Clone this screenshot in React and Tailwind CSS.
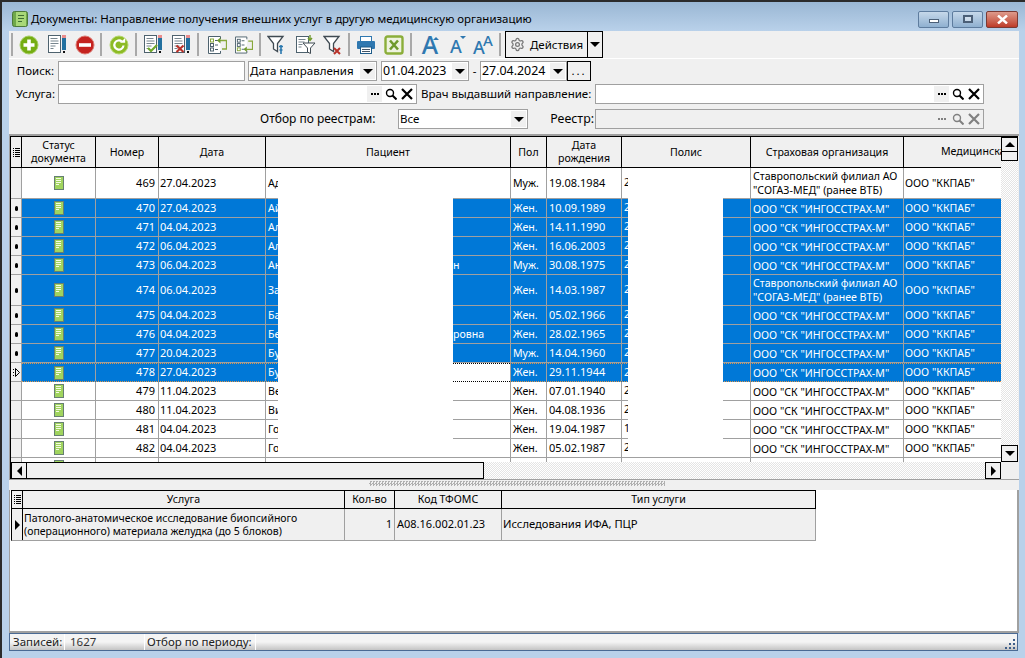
import { Settings } from "lucide-react";

const rows = [
  { n: 469, d: "27.04.2023", p: "Ад", s: "Муж.", b: "19.08.1984", o: "2", tall: true, ins: ["Ставропольский филиал АО", "\"СОГАЗ-МЕД\" (ранее ВТБ)"] },
  { n: 470, d: "27.04.2023", p: "Ай", s: "Жен.", b: "10.09.1989", o: "2", sel: true },
  { n: 471, d: "04.04.2023", p: "Ал", s: "Жен.", b: "14.11.1990", o: "2", sel: true },
  { n: 472, d: "06.04.2023", p: "Ал", s: "Жен.", b: "16.06.2003", o: "2", sel: true },
  { n: 473, d: "06.04.2023", p: "Ан", tail: "н", s: "Муж.", b: "30.08.1975", o: "2", sel: true },
  { n: 474, d: "06.04.2023", p: "За", s: "Жен.", b: "14.03.1987", o: "2", sel: true, tall: true, ins: ["Ставропольский филиал АО", "\"СОГАЗ-МЕД\" (ранее ВТБ)"] },
  { n: 475, d: "04.04.2023", p: "Ба", s: "Жен.", b: "05.02.1966", o: "2", sel: true },
  { n: 476, d: "04.04.2023", p: "Бе", tail: "ровна", s: "Жен.", b: "28.02.1965", o: "2", sel: true },
  { n: 477, d: "20.04.2023", p: "Бу", s: "Муж.", b: "14.04.1960", o: "2", sel: true },
  { n: 478, d: "27.04.2023", p: "Бу", s: "Жен.", b: "29.11.1944", o: "2", sel: true, cur: true },
  { n: 479, d: "11.04.2023", p: "Ве", s: "Жен.", b: "07.01.1940", o: "2" },
  { n: 480, d: "11.04.2023", p: "Ви", s: "Жен.", b: "04.08.1936", o: "2" },
  { n: 481, d: "04.04.2023", p: "Го", s: "Жен.", b: "19.04.1987", o: "1" },
  { n: 482, d: "04.04.2023", p: "Го", s: "Жен.", b: "05.02.1987", o: "2" },
];

function DocStatus() {
  return (
    <svg width="10" height="14" viewBox="0 0 10 14" className="shrink-0">
      <rect x="0.5" y="0.5" width="9" height="13" fill="#a0d45e" stroke="#667f72" />
      <path d="M2 2.500h5M2 4.500h5M2 6.500h5M2 8.500h3" stroke="#f4fae4" strokeWidth="1" />
    </svg>
  );
}

function Plus() {
  return (
    <svg width="20" height="20" viewBox="0 0 20 20">
      <circle cx="10" cy="10" r="9" fill="#75ad12" stroke="#a5cc63" />
      <path d="M10 4.5v11M4.5 10h11" stroke="#fff" strokeWidth="3.6" />
    </svg>
  );
}

function Minus() {
  return (
    <svg width="20" height="20" viewBox="0 0 20 20">
      <circle cx="10" cy="10" r="9" fill="#c5231f" stroke="#dc7a72" />
      <path d="M4 10h12" stroke="#fff" strokeWidth="3.6" />
    </svg>
  );
}

function Refresh() {
  return (
    <svg width="20" height="20" viewBox="0 0 20 20">
      <circle cx="10" cy="10" r="9" fill="#8dbb25" stroke="#b4d66d" />
      <path d="M14.5 10.5a4.6 4.6 0 1 1-1.6-4" fill="none" stroke="#fff" strokeWidth="2.2" />
      <path d="M11 7.8h5.2V3z" fill="#fff" />
    </svg>
  );
}

function Pencil({ x }) {
  return (
    <g>
      <rect x={x} y="0" width="4" height="3" fill="#e98c8c" />
      <rect x={x} y="3" width="4" height="12" fill="#22709f" />
      <rect x={x + 1} y="16" width="2" height="2" fill="#111" />
    </g>
  );
}

function DocLines({ mark }) {
  return (
    <svg width="19" height="19" viewBox="0 0 19 19">
      <rect x="0.5" y="0.5" width="12" height="17" fill="#fff" stroke="#4e626e" />
      <path d="M2.5 3.5h7M2.5 6h8M2.5 8.5h8M2.5 11h5M2.5 13.5h3" stroke="#77858e" />
      {mark === "check" && <path d="M4 13l3 3 6-6" fill="none" stroke="#6fa82a" strokeWidth="2.2" />}
      {mark === "x" && <path d="M4.5 10.5l7 6.5M11.5 10.5l-7 6.5" stroke="#b8322a" strokeWidth="2.2" />}
      <Pencil x={14} />
    </svg>
  );
}

function ListSwap({ flip }) {
  return (
    <svg width="19" height="18" viewBox="0 0 19 18">
      <path d="M12.500 3V0.500H0.500v17h12V15" fill="#fff" stroke="#4e626e" />
      <rect x="2.500" y="3" width="3" height="3" fill="none" stroke={flip ? "#4e626e" : "#88a83c"} />
      <rect x="2.500" y="7.500" width="3" height="3" fill="none" stroke="#4e626e" />
      <rect x="2.500" y="12" width="3" height="3" fill="none" stroke={flip ? "#88a83c" : "#4e626e"} />
      <path d="M7 4.500h3M7 9h3M7 13.500h3" stroke="#4e626e" />
      {flip ? (
        <>
          <path d="M14 5h4.500v8.500H12" fill="none" stroke="#88a83c" strokeWidth="1.300" />
          <path d="M9 13.500l3.500-3v6z" fill="#6f9a2c" />
        </>
      ) : (
        <>
          <path d="M12 4.500h6.500V13H14" fill="none" stroke="#88a83c" strokeWidth="1.300" />
          <path d="M9 4.500l3.500-3v6z" fill="#6f9a2c" />
        </>
      )}
    </svg>
  );
}

function Funnel({ mark }) {
  return (
    <svg width="20" height="20" viewBox="0 0 20 20">
      <path d="M1 1.500h15l-5.500 7v8l-4-2.500v-5.500z" fill="#fff" stroke="#3f4a52" strokeWidth="1.300" />
      {mark === "tool" && <path d="M14 10v9M12 11.500h4M12.500 15h3" stroke="#2b78ae" strokeWidth="1.600" />}
      {mark === "x" && <path d="M11 13l6 6M17 13l-6 6" stroke="#b8322a" strokeWidth="2" />}
    </svg>
  );
}

function DocFunnel() {
  return (
    <svg width="20" height="20" viewBox="0 0 20 20">
      <rect x="0.500" y="1.500" width="12" height="16" fill="#fff" stroke="#4e626e" />
      <path d="M2.500 4.500h7M2.500 7h6M2.500 9.500h4M2.500 12h3" stroke="#77858e" />
      <path d="M7 8h12l-4.500 5v5.500l-3-1.500v-4z" fill="#fff" stroke="#3f4a52" />
      <path d="M14 0v5M12 3l2 2.500 2-2.500" fill="none" stroke="#6f9a2c" strokeWidth="1.400" />
    </svg>
  );
}

function Printer() {
  return (
    <svg width="20" height="20" viewBox="0 0 20 20">
      <rect x="4.500" y="1.500" width="11" height="5" fill="#fff" stroke="#2f78b0" />
      <rect x="1" y="6" width="18" height="8" rx="1" fill="#2f78b0" />
      <rect x="4.500" y="12" width="11" height="6.500" fill="#fff" stroke="#1f5c8a" />
      <path d="M6 14.500h8M6 16.500h8" stroke="#456" />
    </svg>
  );
}

function Excel() {
  return (
    <svg width="20" height="20" viewBox="0 0 20 20">
      <rect x="1.500" y="1.500" width="17" height="17" rx="2" fill="#eef3df" stroke="#8bae3a" strokeWidth="2.400" />
      <path d="M6 5.500l8 9M14 5.500l-8 9" stroke="#6f9a2c" strokeWidth="2.600" />
    </svg>
  );
}

function Arrow({ dir = "down" }) {
  if (dir === "up") return <div className="w-0 h-0 border-x-[5px] border-x-transparent border-b-[5px] border-b-black" />;
  if (dir === "left") return <div className="w-0 h-0 border-y-[5px] border-y-transparent border-r-[5px] border-r-black" />;
  if (dir === "right") return <div className="w-0 h-0 border-y-[5px] border-y-transparent border-l-[5px] border-l-black" />;
  return <div className="w-0 h-0 border-x-[5px] border-x-transparent border-t-[5px] border-t-black" />;
}

function Sep() {
  return <div className="w-[2px] h-[23px] bg-[#a9a9a9] shrink-0" />;
}

function Slot({ className, children }) {
  return <div className={`flex items-center justify-center shrink-0 h-full ${className}`}>{children}</div>;
}

function Toolbar() {
  return (
    <div className="h-[27px] bg-[#f0f0f0] flex items-center shrink-0">
      <div className="w-[2px] shrink-0" />
      <Sep />
      <Slot className="w-[32px]"><Plus /></Slot>
      <Slot className="w-[24px]"><DocLines /></Slot>
      <Slot className="w-[31px]"><Minus /></Slot>
      <Sep />
      <Slot className="w-[33px]"><Refresh /></Slot>
      <Sep />
      <Slot className="w-[33px]"><DocLines mark="check" /></Slot>
      <Slot className="w-[22px]"><DocLines mark="x" /></Slot>
      <div className="w-[5px] shrink-0" />
      <Sep />
      <Slot className="w-[36px]"><ListSwap /></Slot>
      <Slot className="w-[18px]"><ListSwap flip /></Slot>
      <div className="w-[6px] shrink-0" />
      <Sep />
      <Slot className="w-[32px]"><Funnel mark="tool" /></Slot>
      <Slot className="w-[26px]"><DocFunnel /></Slot>
      <Slot className="w-[28px]"><Funnel mark="x" /></Slot>
      <div className="w-[1px] shrink-0" />
      <Sep />
      <Slot className="w-[32px]"><Printer /></Slot>
      <Slot className="w-[24px]"><Excel /></Slot>
      <div className="w-[4px] shrink-0" />
      <Sep />
      <Slot className="w-[36px] relative text-[#2f78b0] font-medium text-[25px] leading-none">
        A<i className="absolute left-[21px] top-[6px] w-0 h-0 border-x-[3px] border-x-transparent border-b-[3px] border-b-[#2f78b0]" />
      </Slot>
      <Slot className="w-[16px] relative text-[#2f78b0] font-medium text-[18px] leading-none pt-[3px]">
        A<i className="absolute left-[12px] top-[5px] w-0 h-0 border-x-[3px] border-x-transparent border-t-[3px] border-t-[#2f78b0]" />
      </Slot>
      <div className="w-[3px] shrink-0" />
      <Slot className="w-[32px] relative text-[#2f78b0] font-medium leading-none">
        <span className="absolute left-[6px] top-[7px] text-[18px]">A</span>
        <span className="absolute left-[16px] top-[2px] text-[15px]">A</span>
      </Slot>
      <Sep />
      <div className="w-[4px] shrink-0" />
      <div className="h-[27px] w-[83px] border border-black flex items-center justify-center gap-[5px] shrink-0">
        <Settings size={15} className="text-[#777]" />
        <span className="text-[11.500px]">Действия</span>
      </div>
      <div className="h-[27px] w-[15px] border border-l-0 border-black flex items-center justify-center shrink-0">
        <Arrow />
      </div>
    </div>
  );
}

function Combo({ className, text, date }) {
  return (
    <div className={`h-[20px] bg-white border border-[#a0a0a0] flex items-center pl-[1px] pr-[1px] shrink-0 ${className}`}>
      <span className={`flex-1 leading-none whitespace-nowrap ${date ? "text-[12.400px]" : "text-[11.500px]"}`}>{text}</span>
      <div className="w-[15px] h-[16px] bg-[#f0f0f0] flex items-center justify-center shrink-0"><Arrow /></div>
    </div>
  );
}

function Lookup({ className, disabled }) {
  const c = disabled ? "#808080" : "#000";
  return (
    <div className={`h-[20px] border border-[#a0a0a0] flex items-center justify-end pr-[1px] shrink-0 ${disabled ? "bg-[#f0f0f0]" : "bg-white"} ${className}`}>
      <div className={`w-[15px] h-[16px] flex items-center justify-center gap-[1px] ${disabled ? "" : "bg-[#f0f0f0]"}`}>
        <i className="w-[2px] h-[2px]" style={{ background: c }} />
        <i className="w-[2px] h-[2px]" style={{ background: c }} />
        <i className="w-[2px] h-[2px]" style={{ background: c }} />
      </div>
      <div className="w-[17px] h-[16px] flex items-center justify-center">
        <svg width="12" height="12" viewBox="0 0 12 12" fill="none" stroke={c}>
          <circle cx="5" cy="5" r="3.500" strokeWidth="1.400" />
          <path d="M7.500 7.500l4 4" strokeWidth="2" />
        </svg>
      </div>
      <div className="w-[16px] h-[16px] flex items-center justify-center">
        <svg width="12" height="12" viewBox="0 0 12 12" stroke={c} strokeWidth="2.200">
          <path d="M1 1l10 10M11 1L1 11" />
        </svg>
      </div>
    </div>
  );
}

function Filters() {
  return (
    <div className="h-[78px] border-t border-white border-b-2 border-b-[#a0a0a0] bg-[#f0f0f0] text-[11.500px] flex flex-col pt-[2px] shrink-0">
      <div className="flex items-center h-[20px]">
        <div className="w-[49px] text-right pr-[4px]">Поиск:</div>
        <div className="w-[187px] h-[20px] bg-white border border-[#a0a0a0] shrink-0" />
        <Combo className="w-[129px] ml-[3px]" text="Дата направления" />
        <Combo className="w-[88px] ml-[4px]" text="01.04.2023" date />
        <div className="w-[11px] text-center">-</div>
        <Combo className="w-[87px]" text="27.04.2024" date />
        <div className="w-[24px] h-[20px] border border-black flex items-center justify-center tracking-[2px] shrink-0">...</div>
      </div>
      <div className="flex items-center h-[20px] mt-[3px]">
        <div className="w-[49px] text-right pr-[3px]">Услуга:</div>
        <Lookup className="w-[359px]" />
        <div className="w-[178px] pl-[4px] whitespace-nowrap shrink-0">Врач выдавший направление:</div>
        <Lookup className="w-[389px]" />
      </div>
      <div className="flex items-center h-[20px] mt-[5px]">
        <div className="w-[251px] shrink-0" />
        <div className="w-[138px] whitespace-nowrap text-[12px] shrink-0">Отбор по реестрам:</div>
        <Combo className="w-[130px]" text="Все" />
        <div className="w-[67px] text-right pr-[1px] text-[12.400px] shrink-0">Реестр:</div>
        <Lookup className="w-[389px]" disabled />
      </div>
    </div>
  );
}

function HeaderCell({ className, children }) {
  return (
    <div className={`h-full border-r border-black flex items-center justify-center text-center leading-[13px] overflow-hidden whitespace-nowrap shrink-0 ${className}`}>
      {children}
    </div>
  );
}

function GridMark() {
  return (
    <svg width="7" height="9" viewBox="0 0 7 9" fill="#000">
      <path d="M0 0h1v1H0zM2 0h5v1H2zM0 2h1v1H0zM2 2h5v1H2zM0 4h1v1H0zM2 4h5v1H2zM0 6h1v1H0zM2 6h5v1H2zM0 8h1v1H0zM2 8h5v1H2z" />
    </svg>
  );
}

function Row({ r }) {
  const sel = r.sel;
  const line = r.cur
    ? "border-y border-dotted border-[#e0964a]"
    : "border-b border-[#a0a0a0]";
  const cell = `h-full border-r border-[#a0a0a0] flex items-center overflow-hidden whitespace-nowrap shrink-0`;
  return (
    <div className={`flex w-[990px] shrink-0 relative ${r.tall ? "h-[31px]" : "h-[19px]"} ${sel ? "text-white" : "text-black"}`}>
      <div className="w-[11px] h-full bg-[#f0f0f0] border-r border-b border-[#a0a0a0] flex items-center justify-center shrink-0">
        {r.cur ? (
          <svg width="7" height="9" viewBox="0 0 7 9" fill="none" stroke="#000">
            <path d="M0.500 1v1M0.500 4v1M0.500 7v1M2.500 0.500l4 4-4 4z" />
          </svg>
        ) : (
          sel && <i className="w-[3px] h-[5px] rounded-full bg-black" />
        )}
      </div>
      <div className={`flex flex-1 min-w-0 overflow-hidden h-full ${sel ? "bg-[#0078d7]" : "bg-white"} ${line}`}>
        <div className={`${cell} w-[74px] justify-center`}><DocStatus /></div>
        <div className={`${cell} w-[63px] justify-end pr-[3px] text-[11px]`}>{r.n}</div>
        <div className={`${cell} w-[107px] pl-[1px] text-[11px]`}>{r.d}</div>
        <div className={`${cell} w-[245px] pl-[2px] pt-[1px] relative ${r.cur ? "bg-white" : ""}`}>
          {r.cur && <div className="absolute left-0 inset-y-0 w-[13px] bg-[#0078d7]" />}
          <span className="relative">{r.p}</span>
          {r.tail && <span className="absolute left-[187px]">{r.tail}</span>}
        </div>
        <div className={`${cell} w-[36px] pl-[2px] pt-[1px]`}>{r.s}</div>
        <div className={`${cell} w-[75px] pl-[2px] text-[11px]`}>{r.b}</div>
        <div className={`${cell} w-[129px] pl-[2px]`}>{r.o}</div>
        <div className={`${cell} w-[153px] pl-[2px] leading-[14px] ${r.ins ? "" : "pt-[1px]"}`}>
          {r.ins ? <div>{r.ins[0]}<br />{r.ins[1]}</div> : 'ООО "СК "ИНГОССТРАХ-М"'}
        </div>
        <div className={`${cell} w-[97px] pl-[1px] pt-[1px] border-r-0`}>ООО "ККПАБ"</div>
      </div>
      {r.cur && <div className="absolute left-[442px] top-0 w-[57px] h-[1px] bg-white border-t border-dotted border-black" />}
      {r.cur && <div className="absolute left-[442px] bottom-0 w-[57px] h-[1px] bg-white border-t border-dotted border-black" />}
    </div>
  );
}

function PartialRow() {
  return (
    <div className="flex w-[990px] h-[19px] shrink-0 bg-white">
      <div className="w-[11px] h-full bg-[#f0f0f0] border-r border-[#a0a0a0] shrink-0" />
      <div className="w-[74px] h-full border-r border-[#a0a0a0] flex justify-center pt-[2px] shrink-0"><DocStatus /></div>
      <div className="w-[63px] h-full border-r border-[#a0a0a0] shrink-0" />
      <div className="w-[107px] h-full border-r border-[#a0a0a0] shrink-0" />
      <div className="w-[245px] h-full border-r border-[#a0a0a0] shrink-0" />
      <div className="w-[36px] h-full border-r border-[#a0a0a0] shrink-0" />
      <div className="w-[75px] h-full border-r border-[#a0a0a0] shrink-0" />
      <div className="w-[129px] h-full border-r border-[#a0a0a0] shrink-0" />
      <div className="w-[153px] h-full border-r border-[#a0a0a0] shrink-0" />
    </div>
  );
}

function MainGrid() {
  return (
    <div className="border-l border-[#a0a0a0] pr-[1px] bg-[#f0f0f0] shrink-0">
      <div className="flex h-[326px] border-l border-black">
        <div className="w-[990px] border-t border-black flex flex-col shrink-0">
          <div className="flex h-[31px] border-b border-black bg-[#f0f0f0] shrink-0">
            <HeaderCell className="w-[11px]"><GridMark /></HeaderCell>
            <HeaderCell className="w-[74px]">Статус<br />документа</HeaderCell>
            <HeaderCell className="w-[63px]">Номер</HeaderCell>
            <HeaderCell className="w-[107px]">Дата</HeaderCell>
            <HeaderCell className="w-[245px]">Пациент</HeaderCell>
            <HeaderCell className="w-[36px]">Пол</HeaderCell>
            <HeaderCell className="w-[75px]">Дата<br />рождения</HeaderCell>
            <HeaderCell className="w-[129px]">Полис</HeaderCell>
            <HeaderCell className="w-[153px]">Страховая организация</HeaderCell>
            <div className="w-[97px] h-full flex items-center pl-[37px] whitespace-nowrap overflow-hidden">Медицинская</div>
          </div>
          <div className="relative h-[294px] overflow-hidden flex flex-col">
            {rows.map((r) => <Row key={r.n} r={r} />)}
            <PartialRow />
            {/* замазанные ФИО и полис */}
            <div className="absolute left-[267px] top-0 w-[175px] h-[289px] bg-white" />
            <div className="absolute left-[617px] top-0 w-[95px] h-[289px] bg-white" />
          </div>
        </div>
        <div className="w-[17px] flex flex-col border-t border-black shrink-0 bg-[repeating-conic-gradient(#e4e4e4_0_25%,#fff_0_50%)] bg-[length:2px_2px]">
          <div className="h-[15px] bg-[#f0f0f0] border border-black flex items-center justify-center shrink-0"><Arrow dir="up" /></div>
          <div className="h-[9px] bg-[#f0f0f0] border border-t-0 border-black shrink-0" />
          <div className="flex-1" />
          <div className="h-[17px] bg-[#f0f0f0] border border-black flex items-center justify-center shrink-0"><Arrow /></div>
        </div>
      </div>
      <div className="flex h-[17px] border-l border-black">
        <div className="w-[16px] bg-[#f0f0f0] border border-black flex items-center justify-center shrink-0"><Arrow dir="left" /></div>
        <div className="w-[457px] bg-[#f0f0f0] border-y border-r border-black shrink-0" />
        <div className="w-[501px] bg-[repeating-conic-gradient(#e4e4e4_0_25%,#fff_0_50%)] bg-[length:2px_2px] shrink-0" />
        <div className="w-[16px] bg-[#f0f0f0] border border-black flex items-center justify-center shrink-0"><Arrow dir="right" /></div>
      </div>
    </div>
  );
}

function Splitter() {
  return (
    <div className="h-[11px] border-t border-[#a0a0a0] bg-[#f0f0f0] flex justify-center pt-[1px] shrink-0">
      <div className="w-[296px] h-[5px] ml-[6px] bg-[repeating-conic-gradient(#b0b0b0_0_25%,#f0f0f0_0_50%)] bg-[length:3px_3px]" />
    </div>
  );
}

function DetailGrid() {
  return (
    <div className="h-[143px] bg-white border-l border-[#a0a0a0] border-r-2 border-r-[#a0a0a0] border-b-2 border-b-[#a0a0a0] pl-[1px] shrink-0">
      <div className="w-[805px]">
        <div className="flex h-[19px] border-y border-black border-l bg-[#f0f0f0]">
          <HeaderCell className="w-[11px]"><GridMark /></HeaderCell>
          <HeaderCell className="w-[322px]">Услуга</HeaderCell>
          <HeaderCell className="w-[50px]">Кол-во</HeaderCell>
          <HeaderCell className="w-[107px]">Код ТФОМС</HeaderCell>
          <HeaderCell className="w-[314px]">Тип услуги</HeaderCell>
        </div>
        <div className="flex h-[32px] border-b border-[#a0a0a0] border-l border-l-black bg-[#f0f0f0]">
          <div className="w-[11px] h-full border-r border-black flex items-center justify-center shrink-0"><Arrow dir="right" /></div>
          <div className="w-[322px] h-full border-r border-[#a0a0a0] pl-[1px] leading-[13px] text-[10.500px] flex items-center whitespace-nowrap overflow-hidden shrink-0">
            <div>Патолого-анатомическое исследование биопсийного<br />(операционного) материала желудка (до 5 блоков)</div>
          </div>
          <div className="w-[50px] h-full border-r border-[#a0a0a0] flex items-center justify-end pr-[2px] shrink-0">1</div>
          <div className="w-[107px] h-full border-r border-[#a0a0a0] flex items-center pl-[2px] text-[11px] shrink-0">A08.16.002.01.23</div>
          <div className="w-[314px] h-full border-r border-[#a0a0a0] flex items-center pl-[1px] text-[11.200px] shrink-0">Исследования ИФА, ПЦР</div>
        </div>
      </div>
    </div>
  );
}

function StatusBar() {
  const grad = "bg-gradient-to-b from-[#f4f4f4] via-[#f4f4f4] to-[#c4c4c4]";
  return (
    <div className="h-[18px] w-[1009px] border border-[#4a6a94] flex items-stretch bg-white gap-[1px] text-[11.500px] text-[#222] leading-none shrink-0 relative">
      <div className={`w-[54px] pl-[3px] flex items-center ${grad}`}>Записей:</div>
      <div className={`w-[79px] pl-[5px] flex items-center text-[#333] ${grad}`}>1627</div>
      <div className={`w-[110px] pl-[2px] flex items-center whitespace-nowrap ${grad}`}>Отбор по периоду:</div>
      <div className={`flex-1 ${grad}`} />
      <svg width="11" height="11" viewBox="0 0 11 11" fill="#3f5f8a" className="absolute right-[1px] bottom-[0px]">
        <path d="M8 0h2v2H8zM8 4h2v2H8zM4 4h2v2H4zM8 8h2v2H8zM4 8h2v2H4zM0 8h2v2H0z" />
      </svg>
    </div>
  );
}

export default function App() {
  return (
    <div className="w-[1025px] h-[658px] bg-[#b9d1ea] border-t-2 border-t-[#2b2b2b] border-l-2 border-l-[#2b2b2b] flex flex-col overflow-hidden font-['Noto_Sans',sans-serif] text-[10.600px] text-black">
      <div className="h-[29px] -ml-[2px] flex items-center bg-gradient-to-b from-[#9ab7d4] to-[#b9d1ea] pl-[12px] pt-[5px] shrink-0 relative">
        <svg width="16" height="16" viewBox="0 0 16 16" className="shrink-0">
          <rect x="0.500" y="0.500" width="15" height="15" rx="2" fill="#6fa84a" stroke="#4d7a3a" />
          <rect x="4" y="1" width="10" height="14" fill="#a8d878" />
          <path d="M6 4.500h6M6 7.500h6M6 10.500h4" stroke="#3f6f34" />
        </svg>
        <span className="ml-[3px] text-[11.450px] whitespace-nowrap">Документы: Направление получения внешних услуг в другую медицинскую организацию</span>
        <div className="ml-auto flex gap-[3px] pr-[7px]">
          <div className="w-[31px] h-[17px] rounded-[2px] border border-[#5e7c9e] bg-gradient-to-b from-[#c6d8ea] to-[#8fb0d0] flex items-center justify-center">
            <div className="w-[10px] h-[4px] mt-[4px] bg-white border border-[#4b5f77]" />
          </div>
          <div className="w-[31px] h-[17px] rounded-[2px] border border-[#5e7c9e] bg-gradient-to-b from-[#c6d8ea] to-[#8fb0d0] flex items-center justify-center">
            <div className="w-[10px] h-[8px] border-2 border-[#4b5f77] bg-white/40" />
          </div>
          <div className="w-[32px] h-[17px] rounded-[2px] border border-[#7a3a34] bg-gradient-to-b from-[#dd9a8c] to-[#bd3a28] flex items-center justify-center">
            <svg width="11" height="9" viewBox="0 0 11 9" stroke="#fff" strokeWidth="2.400"><path d="M1 0.500l9 8M10 0.500l-9 8" /></svg>
          </div>
        </div>
      </div>
      <div className="ml-[7px] w-[1010px] flex flex-col">
        <Toolbar />
        <Filters />
        <MainGrid />
        <Splitter />
        <DetailGrid />
        <StatusBar />
      </div>
    </div>
  );
}
